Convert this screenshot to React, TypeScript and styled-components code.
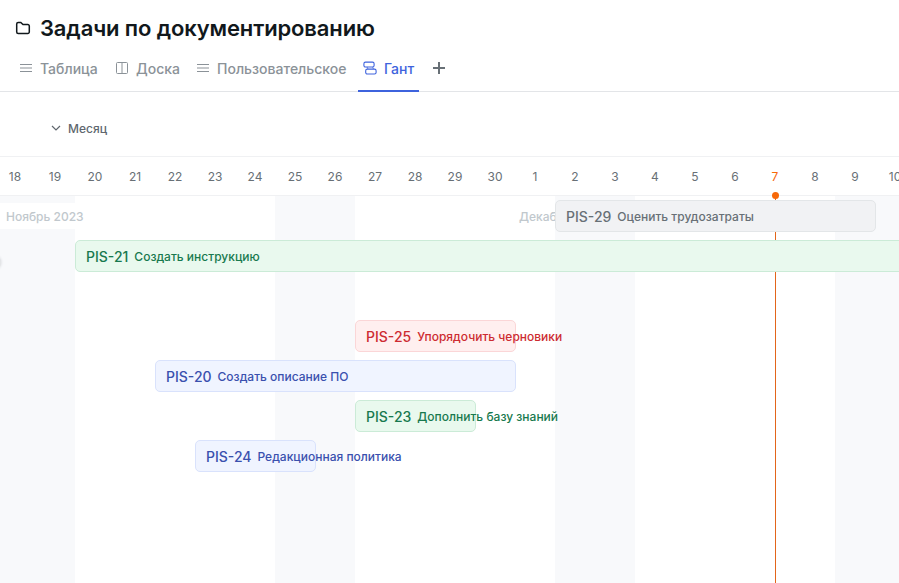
import React from "react";
import styled, { createGlobalStyle } from "styled-components";

const GlobalStyle = createGlobalStyle`
  *, *::before, *::after { box-sizing: border-box; }
  html, body { margin: 0; padding: 0; overflow: hidden; }
  body { font-family: Inter, "Liberation Sans", sans-serif; background: #fff; color: #11181c; }
  svg { display: block; flex: none; }
`;

const DAY = 40;
const FIRST_DAY_OFFSET = -5;

const Page = styled.main`
  display: flex;
  flex-direction: column;
  width: 899px;
  height: 583px;
  overflow: hidden;
`;

const TitleBar = styled.header`
  display: flex;
  align-items: center;
  flex: none;
  gap: 9px;
  height: 56px;
  padding-left: 15px;
`;

const Title = styled.h1`
  margin: 0;
  font-size: 22px;
  line-height: 28px;
  font-weight: 600;
  letter-spacing: -0.13px;
  white-space: nowrap;
`;

const Tabs = styled.nav`
  display: flex;
  flex: none;
  height: 36px;
  padding-left: 14px;
  border-bottom: 1px solid #e3e5e8;
`;

const Tab = styled.a<{ $active?: boolean; $width: number }>`
  display: flex;
  flex: none;
  gap: 6px;
  width: ${(p) => p.$width}px;
  height: 36px;
  padding: 4px 0 0 5px;
  font-size: 14px;
  line-height: 18px;
  font-weight: 500;
  white-space: nowrap;
  color: ${(p) => (p.$active ? "#3e63dd" : "#8b9298")};
  border-bottom: 2px solid ${(p) => (p.$active ? "#3e63dd" : "transparent")};
`;

const AddTab = styled.button`
  display: flex;
  width: 40px;
  height: 26px;
  padding: 5px 0 0 13px;
  border: 0;
  background: none;
`;

const Toolbar = styled.section`
  display: flex;
  flex: none;
  height: 65px;
  padding: 28px 0 0 50px;
  border-bottom: 1px solid #f0f1f3;
`;

const ScaleSelect = styled.button`
  display: flex;
  gap: 6px;
  height: 18px;
  padding: 0;
  border: 0;
  background: none;
  font: 500 12px/18px Inter, sans-serif;
  color: #60676e;
`;

const DayScale = styled.div`
  display: grid;
  flex: none;
  grid-template-columns: repeat(23, ${DAY}px);
  height: 39px;
  margin-left: ${FIRST_DAY_OFFSET}px;
  border-bottom: 1px solid #f0f1f3;
`;

const Day = styled.span<{ $today: boolean }>`
  text-align: center;
  font-size: 12px;
  line-height: 40px;
  color: ${(p) => (p.$today ? "#f76808" : "#687076")};
`;

const Chart = styled.section`
  position: relative;
  display: grid;
  flex: 1;
  grid-template-columns: repeat(23, ${DAY}px);
  grid-template-rows: repeat(9, 40px);
  margin-left: ${FIRST_DAY_OFFSET}px;
`;

const Weekend = styled.div<{ $day: number }>`
  grid-column: ${(p) => p.$day} / span 2;
  grid-row: 1 / -1;
  height: 387px;
  background: #f8f9fb;
`;

const MonthLabel = styled.div<{ $day: number; $span: number; $inset: number }>`
  grid-column: ${(p) => p.$day} / span ${(p) => p.$span};
  grid-row: 1;
  height: 26px;
  margin-top: 7px;
  padding-left: ${(p) => p.$inset}px;
  background: #fff;
  font-size: 12px;
  line-height: 28px;
  font-weight: 500;
  white-space: nowrap;
  color: #c1c8cd;
`;

/* Today marker lies over the day grid and beneath the task bars. */
const TodayLine = styled.div`
  position: absolute;
  left: 780px;
  top: 0;
  bottom: 0;
  width: 1px;
  background: #e3651a;

  &::before {
    content: "";
    position: absolute;
    left: -3px;
    top: -4px;
    width: 7px;
    height: 7px;
    border-radius: 50%;
    background: #f76808;
  }
`;

const EdgeHandle = styled.div`
  position: absolute;
  left: -9px;
  top: 59px;
  width: 15px;
  height: 15px;
  border-radius: 50%;
  background: #e4e6e8;
  box-shadow: 0 0 3px #cfd2d6;
`;

type Tone = "gray" | "green" | "red" | "blue";
const tones: Record<Tone, { bg: string; border: string; text: string }> = {
  gray: { bg: "#f1f2f4", border: "#e3e6e8", text: "#687076" },
  green: { bg: "#e9f9ee", border: "#cbebd7", text: "#18794e" },
  red: { bg: "#ffefef", border: "#fbd6d7", text: "#cd2b31" },
  blue: { bg: "#f0f4ff", border: "#d9e2fc", text: "#3a50ae" },
};

const TaskBar = styled.div<{ $tone: Tone; $start: number; $days: number; $row: number }>`
  position: relative;
  display: flex;
  align-items: center;
  grid-column: ${(p) => p.$start} / span ${(p) => p.$days};
  grid-row: ${(p) => p.$row};
  height: 32px;
  margin: 4px -1px 4px 0;
  padding: 2px 0 0 10px;
  gap: 6px;
  border: 1px solid ${(p) => tones[p.$tone].border};
  border-radius: 5px;
  background: ${(p) => tones[p.$tone].bg};
  color: ${(p) => tones[p.$tone].text};
  font-weight: 500;
  white-space: nowrap;
`;

const TaskId = styled.span`
  font-size: 14px;
  line-height: 20px;
`;

const TaskName = styled.span`
  font-size: 12px;
  line-height: 20px;
`;

const FolderIcon = () => (
  <svg width="16" height="16" viewBox="0 0 16 16" fill="none" stroke="#11181c" strokeWidth="1.5">
    <path d="M1.7 4A1.5 1.5 0 0 1 3.2 2.5h2.6L8 4.6h4.8A1.5 1.5 0 0 1 14.3 6.1V12a1.5 1.5 0 0 1-1.5 1.5H3.2A1.5 1.5 0 0 1 1.7 12Z" />
  </svg>
);

const ListIcon = () => (
  <svg width="15" height="16" viewBox="0 0 15 16" fill="none" stroke="#8b9298">
    <path d="M1 4.5h12M1 11.5h12" />
    <path d="M1 8h12" strokeWidth="2" strokeOpacity=".5" />
  </svg>
);

const BoardIcon = () => (
  <svg width="15" height="16" viewBox="0 0 15 16" fill="none" stroke="#8b9298">
    <rect x="1.5" y="2.5" width="11" height="11" rx="1" />
    <path d="M7 3v10" />
  </svg>
);

const GanttIcon = () => (
  <svg width="15" height="16" viewBox="0 0 15 16" fill="none" stroke="#3e63dd" strokeWidth="1.1">
    <rect x=".9" y="2.1" width="10.2" height="4.9" rx="1.6" />
    <rect x="2.7" y="9.1" width="10.4" height="4.9" rx="1.6" />
    <path d="M4 7.1 5 9M9.5 7.1l1 1.9" strokeOpacity=".65" />
  </svg>
);

const PlusIcon = () => (
  <svg width="14" height="14" viewBox="0 0 14 14" fill="none" stroke="#687076" strokeWidth="2">
    <path d="M7 1v12M1 7h12" />
  </svg>
);

const ChevronIcon = () => (
  <svg width="12" height="16" viewBox="0 0 12 16" fill="none" stroke="#60676e" strokeWidth="1.2">
    <path d="m2 6 4 4 4-4" />
  </svg>
);

const days = [18, 19, 20, 21, 22, 23, 24, 25, 26, 27, 28, 29, 30, 1, 2, 3, 4, 5, 6, 7, 8, 9, 10];

const tasks: { id: string; name: string; tone: Tone; start: number; days: number; row: number }[] = [
  { id: "PIS-29", name: "Оценить трудозатраты", tone: "gray", start: 15, days: 8, row: 1 },
  { id: "PIS-21", name: "Создать инструкцию", tone: "green", start: 3, days: 21, row: 2 },
  { id: "PIS-25", name: "Упорядочить черновики", tone: "red", start: 10, days: 4, row: 4 },
  { id: "PIS-20", name: "Создать описание ПО", tone: "blue", start: 5, days: 9, row: 5 },
  { id: "PIS-23", name: "Дополнить базу знаний", tone: "green", start: 10, days: 3, row: 6 },
  { id: "PIS-24", name: "Редакционная политика", tone: "blue", start: 6, days: 3, row: 7 },
];

export default function App() {
  return (
    <Page>
      <GlobalStyle />
      <TitleBar>
        <FolderIcon />
        <Title>Задачи по документированию</Title>
      </TitleBar>
      <Tabs>
        <Tab $width={96}><ListIcon />Таблица</Tab>
        <Tab $width={81}><BoardIcon />Доска</Tab>
        <Tab $width={167}><ListIcon />Пользовательское</Tab>
        <Tab $width={61} $active><GanttIcon />Гант</Tab>
        <AddTab aria-label="+"><PlusIcon /></AddTab>
      </Tabs>
      <Toolbar>
        <ScaleSelect><ChevronIcon />Месяц</ScaleSelect>
      </Toolbar>
      <DayScale>
        {days.map((day) => <Day key={day} $today={day === 7}>{day}</Day>)}
      </DayScale>
      <Chart>
        {[1, 8, 15, 22].map((day) => <Weekend key={day} $day={day} />)}
        <MonthLabel $day={1} $span={3} $inset={11}>Ноябрь 2023</MonthLabel>
        <MonthLabel $day={14} $span={2} $inset={4}>Декабрь 2023</MonthLabel>
        <EdgeHandle />
        <TodayLine />
        {tasks.map((task) => (
          <TaskBar key={task.id} $tone={task.tone} $start={task.start} $days={task.days} $row={task.row}>
            <TaskId>{task.id}</TaskId>
            <TaskName>{task.name}</TaskName>
          </TaskBar>
        ))}
      </Chart>
    </Page>
  );
}
